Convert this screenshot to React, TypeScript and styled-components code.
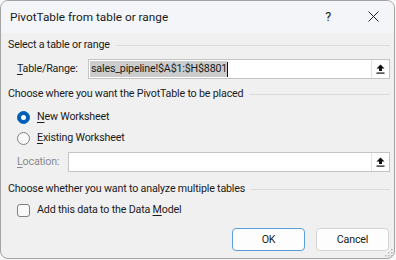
import React from "react";
import styled, { createGlobalStyle } from "styled-components";

const Global = createGlobalStyle`
  html, body { margin: 0; padding: 0; background: #f7f7f7; }
  body { font-family: Roboto, "Noto Sans", sans-serif; font-size: 10.7px; letter-spacing: -0.18px; color: #1b1b1b; }
  * { box-sizing: border-box; }
`;

const Window = styled.div`
  position: relative;
  width: 395px;
  height: 259px;
  border: 1px solid #a3a3a3;
  border-radius: 8px;
  overflow: hidden;
  background: #f0f0f0;
  display: flex;
  flex-direction: column;
`;

const TitleBar = styled.div`
  height: 32px;
  flex: none;
  background: #f3f5f9;
  display: flex;
  align-items: center;
  gap: 8px;
  padding: 0 4px 1px 9px;
`;

const Title = styled.div`
  flex: 1;
  font-size: 11.8px;
  letter-spacing: 0;
  color: #1a1a1a;
`;

const TitleButton = styled.div<{ $w: number }>`
  width: ${(p) => p.$w}px;
  height: 30px;
  display: flex;
  align-items: center;
  justify-content: center;
  color: #222;
  font-size: 12.5px;
`;

const Body = styled.div`
  flex: 1;
  padding: 5px 4px 0 7px;
  display: flex;
  flex-direction: column;
  line-height: 14px;
`;

const Heading = styled.div<{ $mt: number }>`
  display: flex;
  align-items: center;
  gap: 6px;
  margin-top: ${(p) => p.$mt}px;
  height: 14px;
  white-space: nowrap;
  &::after {
    content: "";
    flex: 1;
    border-top: 1px solid #dadada;
  }
`;

const FieldRow = styled.div<{ $mt: number; $labelW: number; $disabled?: boolean }>`
  display: grid;
  grid-template-columns: ${(p) => p.$labelW}px 1fr;
  align-items: center;
  margin-top: ${(p) => p.$mt}px;
  padding-left: 9px;
  color: ${(p) => (p.$disabled ? "#8a8a8a" : "#1b1b1b")};
`;

const Input = styled.div`
  height: 20px;
  border: 1px solid #c4c4c4;
  background: #ffffff;
  display: flex;
  align-items: center;
  padding-left: 1px;
`;

const InputText = styled.div`
  flex: 1;
  display: flex;
  align-items: center;
  height: 100%;
`;

const Selected = styled.span`
  background: #cccccc;
  color: #1b1b1b;
  line-height: 16px;
  padding: 0 0 0 1px;
`;

const Caret = styled.span`
  width: 1px;
  height: 15px;
  background: #111;
`;

const PickButton = styled.div`
  width: 18px;
  height: 18px;
  border-left: 1px solid #e2e2e2;
  background: #fdfdfd;
  display: flex;
  align-items: center;
  justify-content: center;
`;

const OptionRow = styled.div<{ $mt: number }>`
  display: flex;
  align-items: center;
  gap: 7px;
  padding-left: 9px;
  margin-top: ${(p) => p.$mt}px;
  height: 14px;
`;

const Radio = styled.span<{ $on?: boolean }>`
  width: 13px;
  height: 13px;
  border-radius: 50%;
  flex: none;
  display: flex;
  align-items: center;
  justify-content: center;
  background: ${(p) => (p.$on ? "#005fb8" : "#f9f9f9")};
  border: 1px solid ${(p) => (p.$on ? "#005fb8" : "#808080")};
  &::after {
    content: "";
    width: 5px;
    height: 5px;
    border-radius: 50%;
    background: ${(p) => (p.$on ? "#ffffff" : "transparent")};
  }
`;

const Check = styled.span`
  width: 13px;
  height: 13px;
  border-radius: 3px;
  border: 1px solid #808080;
  background: #f9f9f9;
  flex: none;
`;

const U = styled.span`
  text-decoration: underline;
  text-underline-offset: 2px;
`;

const Footer = styled.div`
  display: flex;
  justify-content: flex-end;
  gap: 11px;
  margin-top: 11px;
  padding-right: 1px;
`;

const Button = styled.div<{ $primary?: boolean }>`
  width: 73px;
  height: 23px;
  border-radius: 4px;
  background: #fdfdfd;
  border: 1px solid ${(p) => (p.$primary ? "#5a9fdc" : "#d4d4d4")};
  display: flex;
  align-items: center;
  justify-content: center;
  color: #1b1b1b;
`;

const Grip = styled.svg`
  position: absolute;
  right: 1px;
  bottom: 1px;
`;

const UpIcon = () => (
  <svg width="11" height="12" viewBox="0 0 11 12">
    <path d="M5.5 1.5 L9.5 5.5 L7 5.5 L7 8 L4 8 L4 5.5 L1.5 5.5 Z" fill="#111" />
    <rect x="1.5" y="9.5" width="8" height="1.2" fill="#111" />
  </svg>
);

const CloseIcon = () => (
  <svg width="11" height="11" viewBox="0 0 11 11">
    <path d="M0.5 0.5 L10.5 10.5 M10.5 0.5 L0.5 10.5" stroke="#222" strokeWidth="1" />
  </svg>
);

export default function App() {
  return (
    <>
      <Global />
      <Window>
        <TitleBar>
          <Title>PivotTable from table or range</Title>
          <TitleButton $w={40}>?</TitleButton>
          <TitleButton $w={34}>
            <CloseIcon />
          </TitleButton>
        </TitleBar>
        <Body>
          <Heading $mt={0}>Select a table or range</Heading>
          <FieldRow $mt={7} $labelW={71}>
            <span>
              <U>T</U>able/Range:
            </span>
            <Input>
              <InputText>
                <Selected>sales_pipeline!$A$1:$H$8801</Selected>
                <Caret />
              </InputText>
              <PickButton>
                <UpIcon />
              </PickButton>
            </Input>
          </FieldRow>
          <Heading $mt={8}>Choose where you want the PivotTable to be placed</Heading>
          <OptionRow $mt={9}>
            <Radio $on />
            <span>
              <U>N</U>ew Worksheet
            </span>
          </OptionRow>
          <OptionRow $mt={7}>
            <Radio />
            <span>
              <U>E</U>xisting Worksheet
            </span>
          </OptionRow>
          <FieldRow $mt={7} $labelW={51} $disabled>
            <span>
              <U>L</U>ocation:
            </span>
            <Input>
              <InputText />
              <PickButton>
                <UpIcon />
              </PickButton>
            </Input>
          </FieldRow>
          <Heading $mt={10}>Choose whether you want to analyze multiple tables</Heading>
          <OptionRow $mt={7}>
            <Check />
            <span>
              Add this data to the Data <U>M</U>odel
            </span>
          </OptionRow>
          <Footer>
            <Button $primary>OK</Button>
            <Button>Cancel</Button>
          </Footer>
        </Body>
        <Grip width="9" height="9" viewBox="0 0 9 9">
          <g fill="#b5b5b5">
            <rect x="7" y="1" width="1.5" height="1.5" />
            <rect x="4" y="4" width="1.5" height="1.5" />
            <rect x="7" y="4" width="1.5" height="1.5" />
            <rect x="1" y="7" width="1.5" height="1.5" />
            <rect x="4" y="7" width="1.5" height="1.5" />
            <rect x="7" y="7" width="1.5" height="1.5" />
          </g>
        </Grip>
      </Window>
    </>
  );
}
